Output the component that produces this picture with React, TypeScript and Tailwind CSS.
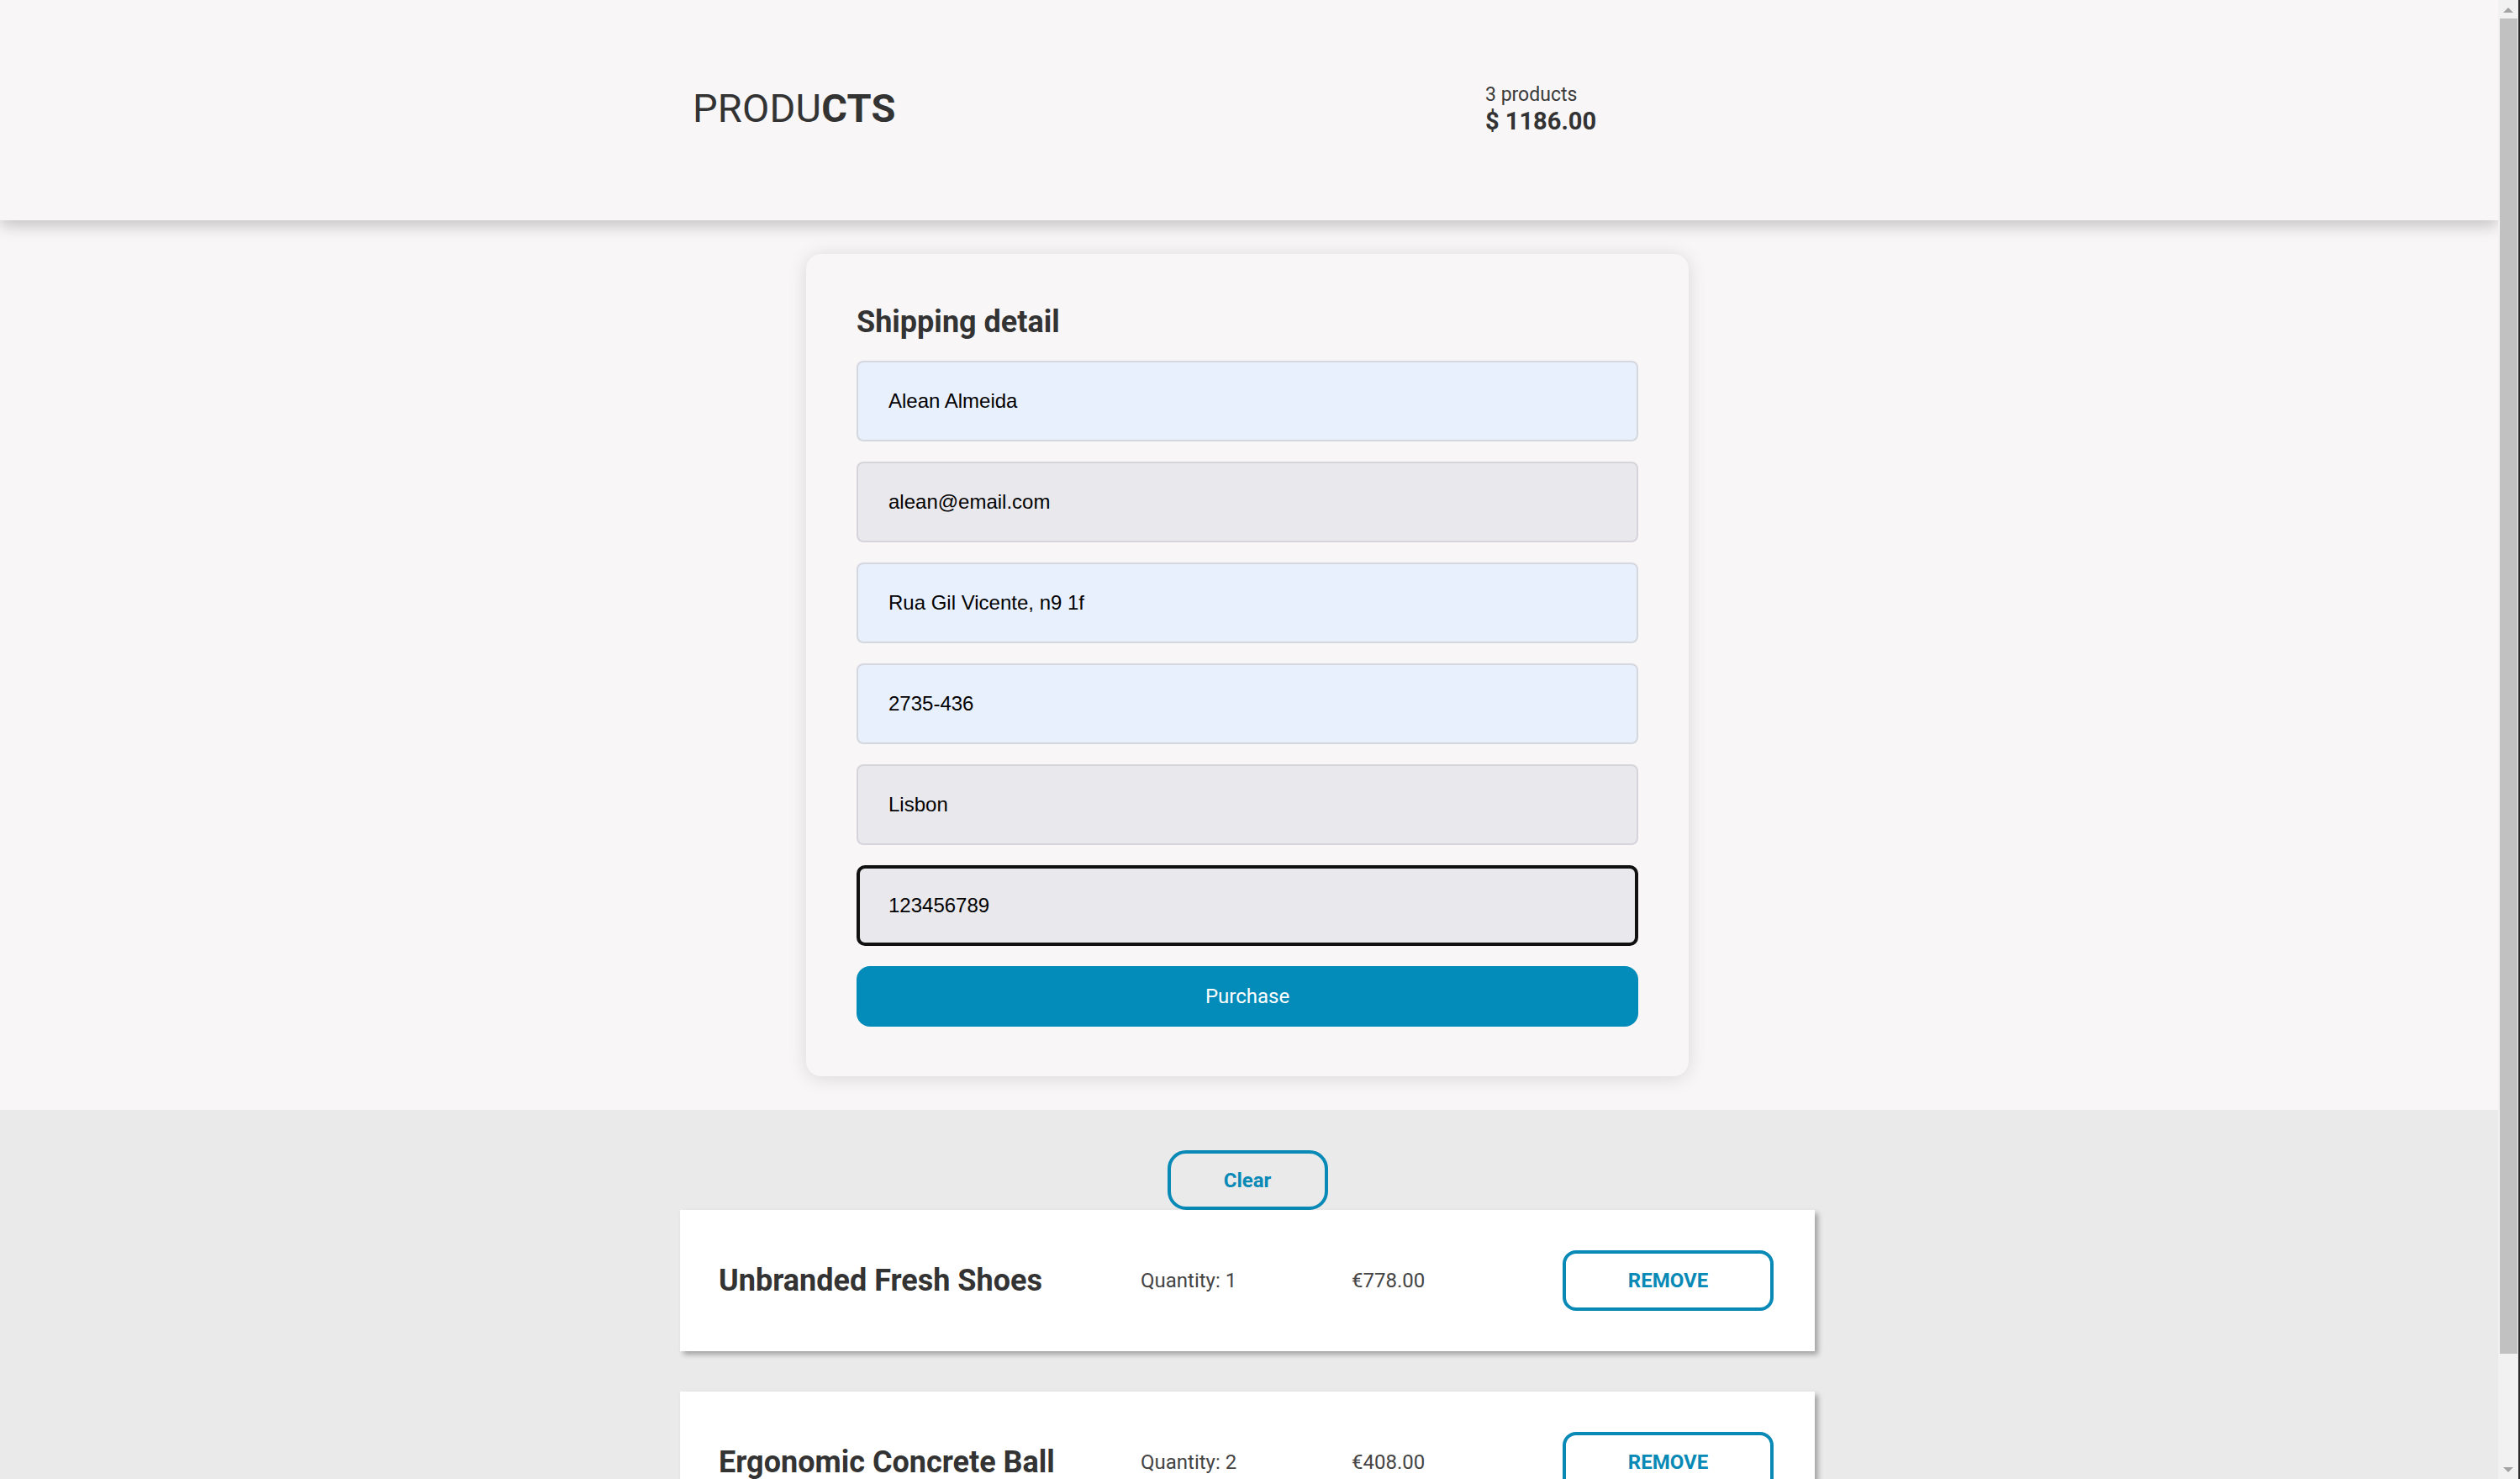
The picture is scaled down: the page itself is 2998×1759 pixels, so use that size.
import React from "react";

const fields: { value: string; tone: "blue" | "gray" | "focus" }[] = [
  { value: "Alean Almeida", tone: "blue" },
  { value: "alean@email.com", tone: "gray" },
  { value: "Rua Gil Vicente, n9 1f", tone: "blue" },
  { value: "2735-436", tone: "blue" },
  { value: "Lisbon", tone: "gray" },
  { value: "123456789", tone: "focus" },
];

const products = [
  { name: "Unbranded Fresh Shoes", qty: 1, price: "€778.00" },
  { name: "Ergonomic Concrete Ball", qty: 2, price: "€408.00" },
];

function Field({ value, tone }: { value: string; tone: "blue" | "gray" | "focus" }) {
  const cls =
    tone === "blue"
      ? "border-2 border-[#d5d7de] bg-[#e8f0fe] pl-[36px] rounded-[8px]"
      : tone === "gray"
      ? "border-2 border-[#d5d5db] bg-[#e8e8ed] pl-[36px] rounded-[8px]"
      : "border-4 border-[#111111] bg-[#e8e8ed] pl-[34px] rounded-[10px]";
  return (
    <input
      readOnly
      value={value}
      className={`h-[96px] w-full outline-none text-[24px] text-black font-['Liberation_Sans',Arial,sans-serif] ${cls}`}
    />
  );
}

function Arrow({ up }: { up: boolean }) {
  return (
    <div className="h-[22px] flex items-center justify-center">
      <svg width="12" height="7" viewBox="0 0 12 7">
        {up ? <polygon points="0,7 12,7 6,1" fill="#a3a3a3" /> : <polygon points="0,0 12,0 6,6" fill="#a3a3a3" />}
      </svg>
    </div>
  );
}

export default function App() {
  return (
    <div className="flex h-screen w-full overflow-hidden font-['Roboto',sans-serif] text-[#333333]">
      <main className="flex-1 h-full overflow-hidden bg-[#eaeaea]">
        <header className="relative z-10 h-[262px] bg-[#f8f6f7] pr-[4px] pb-[5px] shadow-[0_6px_18px_rgba(0,0,0,0.22)]">
          <div className="w-[1350px] mx-auto h-full px-[15px] flex items-center">
            <div className="w-[943px] text-[47px] leading-none tracking-[0.2px]">
              PRODU<span className="font-bold">CTS</span>
            </div>
            <div className="flex flex-col pt-[2px]">
              <span className="text-[23px] leading-[28px] text-[#3a3a3a]">3 products</span>
              <span className="text-[29px] leading-[34px] font-bold">$ 1186.00</span>
            </div>
          </div>
        </header>

        <section className="bg-[#f8f6f7] py-[40px] pr-[4px]">
          <div className="w-[1050px] mx-auto rounded-[18px] bg-[#f8f6f7] shadow-[0_2px_22px_rgba(0,0,0,0.13)] px-[60px] pt-[60px] pb-[59px]">
            <h2 className="text-[36px] leading-[43px] font-bold text-[#333333]">Shipping detail</h2>
            <div className="mt-[24px] flex flex-col gap-[24px]">
              {fields.map((f) => (
                <Field key={f.value} value={f.value} tone={f.tone} />
              ))}
              <button className="h-[72px] w-full rounded-[16px] bg-[#038bba] text-white text-[24px]">
                Purchase
              </button>
            </div>
          </div>
        </section>

        <section className="pt-[48px] pr-[4px] flex flex-col items-center">
          <button className="w-[191px] h-[71px] border-4 border-[#0889b6] rounded-[22px] text-[24px] font-bold text-[#0889b6]">
            Clear
          </button>
          <div className="w-[1350px] flex flex-col gap-[48px]">
            {products.map((p) => (
              <div
                key={p.name}
                className="h-[168px] bg-white shadow-[4px_4px_6px_rgba(0,0,0,0.3)] grid grid-cols-[2fr_1fr_1fr_1fr] items-center pl-[46px] pr-[49px]"
              >
                <span className="text-[36px] font-bold text-[#333333]">{p.name}</span>
                <span className="text-[24px] text-[#444444]">Quantity: {p.qty}</span>
                <span className="text-[24px] text-[#444444]">{p.price}</span>
                <button className="w-full h-[72px] border-4 border-[#0889b6] rounded-[16px] text-[24px] font-bold text-[#0889b6] uppercase">
                  Remove
                </button>
              </div>
            ))}
          </div>
        </section>
      </main>
      <aside className="w-[24px] h-full bg-[#f1f1f1] flex flex-col">
        <Arrow up />
        <div className="h-[1588px] ml-[2px] mr-[1px] bg-[#c1c1c1]" />
        <div className="flex-1" />
        <Arrow up={false} />
      </aside>
      <div className="w-[2px] h-full bg-[#2a2a2a]" />
    </div>
  );
}
